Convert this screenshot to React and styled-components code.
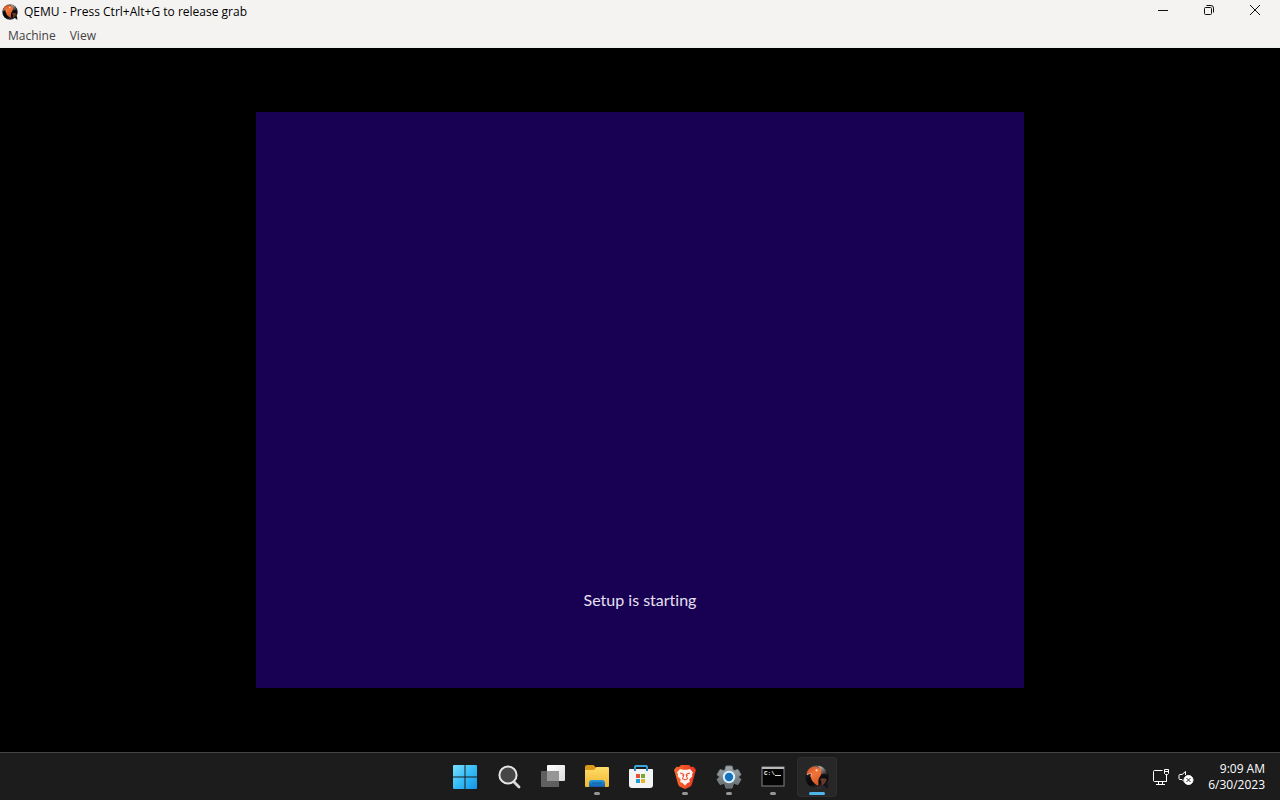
import React from "react";
import styled, { createGlobalStyle } from "styled-components";

const GlobalStyle = createGlobalStyle`
  * { box-sizing: border-box; }
  body { margin: 0; background: #000; }
  button { border: 0; padding: 0; background: none; color: inherit; font: inherit; }
  svg { display: block; }
`;

const Desktop = styled.div`
  display: flex;
  flex-direction: column;
  min-height: 100vh;
  font-family: "Open Sans", "Noto Sans", sans-serif;
  font-size: 12px;
  line-height: 16px;
`;

const WindowHeader = styled.header`
  background: #f4f3f2;
  color: #000;
  border-bottom: 1px solid #eef2ee;
`;

const TitleBar = styled.div`
  display: flex;
  align-items: center;
  height: 24px;
  padding: 0 2px;
`;

const Title = styled.h1`
  flex: 1;
  margin: 0 0 0 6px;
  font-size: 12px;
  font-weight: 400;
`;

const WindowControls = styled.div`
  display: flex;
  align-self: flex-start;
`;

const WindowButton = styled.button`
  display: grid;
  place-items: center;
  width: 46px;
  height: 20px;
`;

const MenuBar = styled.nav`
  display: flex;
  align-items: center;
  gap: 14px;
  height: 23px;
  padding: 0 8px;
`;

const MenuItem = styled.button`
  color: #424242;
  line-height: 16px;
`;

const Display = styled.main`
  flex: 1;
  display: grid;
  place-items: center;
  background: #000;
`;

const GuestScreen = styled.section`
  display: flex;
  justify-content: center;
  align-items: flex-end;
  width: 60%;
  aspect-ratio: 4 / 3;
  padding-bottom: 76px;
  background: #180052;
`;

const SetupStatus = styled.p`
  margin: 0;
  color: #e6e0f2;
  font-family: Lato, "Open Sans", sans-serif;
  font-size: 16px;
  font-variant-ligatures: none;
  line-height: 24px;
`;

const Taskbar = styled.footer`
  display: grid;
  grid-template-columns: 1fr auto 1fr;
  align-items: center;
  height: 48px;
  border-top: 1px solid #454545;
  background: #1c1c1c;
  color: #fff;
`;

const PinnedApps = styled.nav`
  grid-column: 2;
  display: flex;
  gap: 4px;
  padding-left: 2px;
`;

const AppButton = styled.button`
  display: grid;
  grid-template-rows: 1fr auto;
  justify-items: center;
  width: 40px;
  height: 40px;
  padding: 8px 0 2px;
  border-radius: 4px;
  background: ${(p) => (p.$active ? "#272727" : "transparent")};
  box-shadow: ${(p) => (p.$active ? "inset 0 0 0 1px #2e2e2e" : "none")};
`;

const RunMark = styled.span`
  width: ${(p) => (p.$state === "active" ? "16px" : "6px")};
  height: 3px;
  border-radius: 2px;
  background: ${(p) =>
    p.$state === "active" ? "#4fb5ea" : p.$state === "open" ? "#969696" : "transparent"};
`;

const Tray = styled.div`
  display: flex;
  justify-content: flex-end;
  align-items: center;
  gap: 8px;
  padding-right: 15px;
`;

const TrayButton = styled.button`
  display: grid;
  place-items: center;
  height: 40px;
`;

const Clock = styled.button`
  display: grid;
  margin-left: 6px;
  text-align: right;
  line-height: 16px;
`;

function QemuIcon({ size, id }) {
  return (
    <svg width={size} height={size} viewBox="0 0 24 24" aria-hidden="true">
      <defs>
        <linearGradient id={id + "b"} x1=".4" y1="0" x2=".6" y2="1">
          <stop offset="0" stopColor="#6b6561" />
          <stop offset=".35" stopColor="#171315" />
          <stop offset=".75" stopColor="#060609" />
          <stop offset="1" stopColor="#3a343c" />
        </linearGradient>
        <linearGradient id={id + "o"} x1="0" y1="0" x2=".5" y2="1">
          <stop offset="0" stopColor="#d44c16" />
          <stop offset=".5" stopColor="#f2743a" />
          <stop offset="1" stopColor="#d45a25" />
        </linearGradient>
        <linearGradient id={id + "s"} x1="0" y1="0" x2="1" y2="1">
          <stop offset="0" stopColor="#d8cec8" />
          <stop offset="1" stopColor="#756c69" stopOpacity=".2" />
        </linearGradient>
      </defs>
      <circle cx="12" cy="12" r="11.500" fill={"url(#" + id + "b)"} />
      <path d="m17 19 6 5-.5-6Z" fill="#17131a" />
      <path d="M13 1c5 .5 8.500 3.500 9.500 9-2-1.500-4-1.500-6-.5 0-3-1-6-3.500-8.500Z" fill={"url(#" + id + "s)"} />
      <path d="M1.500 10C2 5 5.500 1.800 10 1.800c4 0 6.500 2.400 6.500 5.700 0 3-2.500 4.500-3 7-.4 2.200.5 3.800-.5 6.300C9.500 19 6 15.500 5.800 11.500c0-1.300.3-2.200.8-3C4.500 8 2.500 8.800 1.500 10Z" fill={"url(#" + id + "o)"} />
      <path d="M2 10c1.200-1.200 2.700-1.600 4.600-1.500-.5 1-.7 2-.7 3.300" fill="none" stroke="#f0b592" />
      <path d="M15 14c2.500-1 5-.8 7 .2-1 3-3 5-5.500 6.300.2-2.500-.2-4.500-1.500-6.500Z" fill="#97583c" opacity=".65" />
      <circle cx="11.500" cy="5.200" r="1" fill="#fff0da" />
    </svg>
  );
}

function StartIcon() {
  return (
    <svg width="24" height="24" viewBox="0 0 24 24" aria-hidden="true">
      <defs>
        <linearGradient id="start" gradientUnits="userSpaceOnUse" x1="0" y1="0" x2="24" y2="24">
          <stop offset="0" stopColor="#7cdefd" /><stop offset=".5" stopColor="#36bdf7" /><stop offset="1" stopColor="#1394e8" />
        </linearGradient>
      </defs>
      <path d="M1 0h10.500v11.500H0V1a1 1 0 0 1 1-1Zm11.500 0H23a1 1 0 0 1 1 1v10.500H12.500ZM0 12.500h11.500V24H1a1 1 0 0 1-1-1Zm12.500 0H24V23a1 1 0 0 1-1 1H12.500Z" fill="url(#start)" />
    </svg>
  );
}

function SearchIcon() {
  return (
    <svg width="24" height="24" viewBox="0 0 24 24" aria-hidden="true">
      <path d="m17 17 5 5" stroke="#d9d9d9" strokeWidth="2.800" strokeLinecap="round" />
      <circle cx="11" cy="10" r="8.600" fill="#464646" stroke="#e5e5e5" strokeWidth="2" />
    </svg>
  );
}

function TaskViewIcon() {
  return (
    <svg width="24" height="24" viewBox="0 0 24 24" aria-hidden="true">
      <defs><linearGradient id="task" x1="0" y1="0" x2="1" y2="1"><stop stopColor="#fff" /><stop offset="1" stopColor="#dcdcdc" /></linearGradient></defs>
      <rect x="6" y="0" width="18" height="16" rx="1" fill="url(#task)" />
      <path d="M1 6h17v16H1a1 1 0 0 1-1-1V7a1 1 0 0 1 1-1Z" fill="#606060" />
      <path d="M6 6h12v10H6Z" fill="#969696" />
    </svg>
  );
}

function ExplorerIcon() {
  return (
    <svg width="26" height="24" viewBox="0 0 26 24" aria-hidden="true">
      <defs>
        <linearGradient id="folder" x1="0" y1="0" x2="0" y2="1"><stop stopColor="#ffdc69" /><stop offset="1" stopColor="#f2b72f" /></linearGradient>
        <linearGradient id="pocket" x1="0" y1="0" x2="0" y2="1"><stop stopColor="#259be2" /><stop offset="1" stopColor="#145ca9" /></linearGradient>
      </defs>
      <path d="M1 2a2 2 0 0 1 2-2h6.500l3 3H23v6H1Z" fill="#d89a17" />
      <path d="M1 5h9l2.500-3H24a1 1 0 0 1 1 1v18a1 1 0 0 1-1 1H2a1 1 0 0 1-1-1Z" fill="url(#folder)" />
      <path d="M5 22v-4a3 3 0 0 1 3-3h10a3 3 0 0 1 3 3v4Z" fill="url(#pocket)" />
      <path d="M8 18h10" stroke="#124b87" strokeWidth="1" opacity=".6" />
    </svg>
  );
}

function StoreIcon() {
  return (
    <svg width="24" height="24" viewBox="0 0 24 24" aria-hidden="true">
      <path d="M6 5V2a1 1 0 0 1 1-1h10a1 1 0 0 1 1 1v3" fill="none" stroke="#3aa5de" strokeWidth="2" />
      <path d="M1 4h22a1 1 0 0 1 1 1v15a3 3 0 0 1-3 3H3a3 3 0 0 1-3-3V5a1 1 0 0 1 1-1Z" fill="#f3f5f5" />
      <path d="M5 6V3h2v3m10 0V3h2v3" fill="#278ac5" />
      <path fill="#e35335" d="M7 9h4v4H7z" /><path fill="#78a832" d="M12 9h4v4h-4z" />
      <path fill="#1e9cd7" d="M7 14h4v4H7z" /><path fill="#edb526" d="M12 14h4v4h-4z" />
    </svg>
  );
}

function BraveIcon() {
  return (
    <svg width="22" height="24" viewBox="0 0 22 24" aria-hidden="true">
      <defs><linearGradient id="brave"><stop stopColor="#fa6a2b" /><stop offset="1" stopColor="#e93523" /></linearGradient></defs>
      <path d="M7 0h8l2 2 2.500-.2L22 5l-1 3-3 11c-.4 1.200-1 2-2 2.700L11 24l-5-2.300c-1-.7-1.600-1.500-2-2.700L1 8 0 5l2.500-3.200L5 2Z" fill="url(#brave)" />
      <path d="m6 4 3 .7h4l3-.7 3 3.500-1 2 .3 1.800-3 3.200.6 2.500-2.400 1-2.500 2.500L8.500 18l-2.400-1 .6-2.500-3-3.200.3-1.800-1-2Z" fill="#fff4ed" />
      <path d="m6 8 3.500 1-1 1.600m7.500-2.600-3.500 1 1 1.600M9.800 9.500l-.6 3-1.200 1 3 1.400 3-1.400-1.200-1-.6-3" fill="none" stroke="#e8442c" />
    </svg>
  );
}

function SettingsIcon() {
  return (
    <svg width="26" height="24" viewBox="0 0 26 24" aria-hidden="true">
      <defs><linearGradient id="gear" x1="0" y1="0" x2="0" y2="1"><stop stopColor="#a3aaad" /><stop offset="1" stopColor="#60676b" /></linearGradient></defs>
      <path d="M10 1h6l1 3.700 1.400.8 3.600-1 3 5.200-2.700 2.300 2.700 2.400-3 5.100-3.600-1-1.400.8L16 23h-6l-1-3.700-1.400-.8-3.600 1-3-5.100L3.700 12 1 9.700l3-5.200 3.600 1 1.400-.8Z" fill="url(#gear)" stroke="#777f83" strokeLinejoin="round" />
      <circle cx="13" cy="12" r="6.200" fill="#d8f1ff" />
      <circle cx="13" cy="12" r="4.200" fill="#1670bb" />
    </svg>
  );
}

function TerminalIcon() {
  return (
    <svg width="24" height="24" viewBox="0 0 24 24" aria-hidden="true">
      <rect x="1" y="2" width="22" height="19" fill="#050505" stroke="#858585" />
      <path d="M1 3h22" stroke="#b9b9b9" strokeWidth="2" />
      <text x="3" y="10" fill="#fff" fontFamily="Liberation Mono, monospace" fontSize="6" fontWeight="700">C:\_</text>
      <path d="M14 10.500h6" stroke="#ddd" />
    </svg>
  );
}

const apps = [
  { name: "Start", icon: <StartIcon /> },
  { name: "Search", icon: <SearchIcon /> },
  { name: "Task view", icon: <TaskViewIcon /> },
  { name: "File Explorer", icon: <ExplorerIcon />, state: "open" },
  { name: "Microsoft Store", icon: <StoreIcon /> },
  { name: "Brave", icon: <BraveIcon />, state: "open" },
  { name: "Settings", icon: <SettingsIcon />, state: "open" },
  { name: "Command Prompt", icon: <TerminalIcon />, state: "open" },
  { name: "QEMU", icon: <QemuIcon size={24} id="task-qemu" />, state: "active" },
];

export default function App() {
  return (
    <Desktop>
      <GlobalStyle />
      <WindowHeader>
        <TitleBar>
          <QemuIcon size={16} id="title-qemu" />
          <Title>QEMU - Press Ctrl+Alt+G to release grab</Title>
          <WindowControls>
            <WindowButton aria-label="Minimize">
              <svg width="10" height="10" viewBox="0 0 10 10"><path d="M0 5.500h10" stroke="#111" /></svg>
            </WindowButton>
            <WindowButton aria-label="Restore">
              <svg width="10" height="10" viewBox="0 0 10 10" fill="none" stroke="#111"><rect x=".5" y="2.500" width="7" height="7" rx="1" /><path d="M2.500.5H7A2.500 2.500 0 0 1 9.500 3v4.500" /></svg>
            </WindowButton>
            <WindowButton aria-label="Close">
              <svg width="10" height="10" viewBox="0 0 10 10"><path d="m0 0 10 10M10 0 0 10" stroke="#111" /></svg>
            </WindowButton>
          </WindowControls>
        </TitleBar>
        <MenuBar aria-label="Window menu">
          <MenuItem>Machine</MenuItem>
          <MenuItem>View</MenuItem>
        </MenuBar>
      </WindowHeader>
      <Display>
        <GuestScreen aria-label="Guest display">
          <SetupStatus role="status">Setup is starting</SetupStatus>
        </GuestScreen>
      </Display>
      <Taskbar>
        <PinnedApps aria-label="Taskbar">
          {apps.map((app) => (
            <AppButton key={app.name} aria-label={app.name} $active={app.state === "active"}>
              {app.icon}
              <RunMark $state={app.state} />
            </AppButton>
          ))}
        </PinnedApps>
        <Tray>
          <TrayButton aria-label="Network">
            <svg width="18" height="18" viewBox="0 0 18 18" fill="none" stroke="#fff">
              <path d="M10.500 2.500h-8a1 1 0 0 0-1 1v9a1 1 0 0 0 1 1h12v-5M6.500 14v2M10.500 14v2M4 16.500h9M12.500 1.500h4v4l-1 1h-2l-1-1ZM12.500 3.500h4M14.500 6.500v7" />
            </svg>
          </TrayButton>
          <TrayButton aria-label="Volume muted">
            <svg width="16" height="18" viewBox="0 0 16 18" fill="none" stroke="#fff">
              <path d="M7.500 7V3.500L4 6.500H2a1 1 0 0 0-1 1v3a1 1 0 0 0 1 1h2l2 2" />
              <circle cx="10.500" cy="12" r="4.500" fill="#fff" />
              <path d="m8.500 10 4 4m0-4-4 4" stroke="#222" />
            </svg>
          </TrayButton>
          <Clock aria-label="9:09 AM, 6/30/2023">
            <time>9:09 AM</time>
            <time>6/30/2023</time>
          </Clock>
        </Tray>
      </Taskbar>
    </Desktop>
  );
}
